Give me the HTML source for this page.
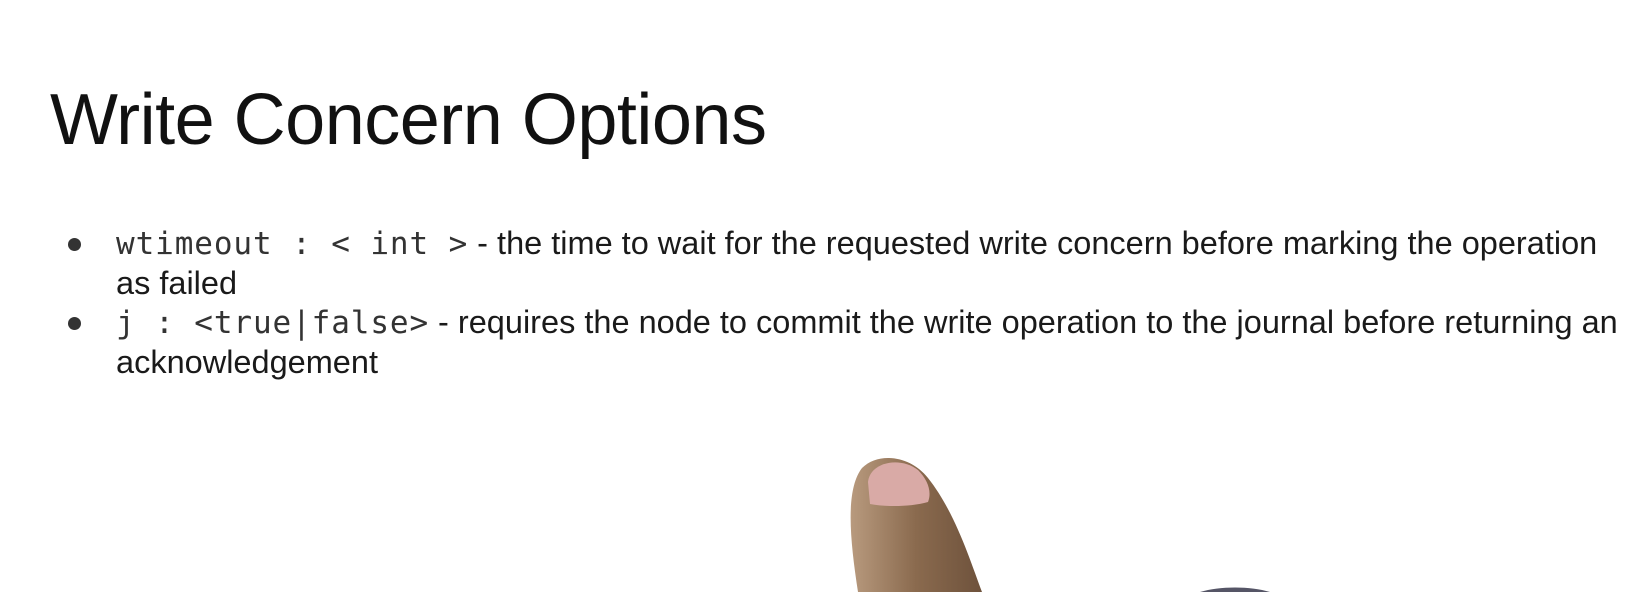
<!DOCTYPE html>
<html><head><style>
body{margin:0;width:1630px;height:592px;background:#fff;overflow:hidden;position:relative;font-family:"Liberation Sans",sans-serif;color:#111}
h1{position:absolute;left:50px;top:84px;margin:0;font-weight:normal;font-size:72px;letter-spacing:-0.5px;line-height:1}
.b{position:absolute;left:116px;width:1520px;font-size:32.5px;line-height:39px;color:#1a1a1a;white-space:nowrap}
.d{position:absolute;left:68px;width:13px;height:13px;border-radius:50%;background:#333}
.m{font-family:"DejaVu Sans Mono","Liberation Mono",monospace;font-size:31px;color:#333;letter-spacing:0.9px}
</style></head><body>
<h1>Write Concern Options</h1>
<div class="d" style="top:238px"></div>
<div class="b" style="top:224px"><span class="m">wtimeout : &lt; int &gt;</span> - the time to wait for the requested write concern before marking the operation<br>as failed</div>
<div class="d" style="top:317px"></div>
<div class="b" style="top:303px"><span class="m">j : &lt;true|false&gt;</span> - requires the node to commit the write operation to the journal before returning an<br>acknowledgement</div>
<svg style="position:absolute;left:0;top:0" width="1630" height="592">
<defs><linearGradient id="g" x1="0" y1="0" x2="1" y2="0"><stop offset="0" stop-color="#b89a7e"/><stop offset="0.5" stop-color="#8a6a4e"/><stop offset="1" stop-color="#6e523c"/></linearGradient></defs>
<path d="M858 592 C850 540 845 490 862 468 C878 452 910 455 928 478 C955 512 970 560 982 592 Z" fill="url(#g)"/>
<path d="M868 482 C870 462 900 456 918 470 C928 480 932 492 928 502 C910 507 886 507 870 504 Z" fill="#d9aaa6"/>
<path d="M1200 592 C1220 586 1250 586 1270 592 Z" fill="#556"/>
</svg>
</body></html>
